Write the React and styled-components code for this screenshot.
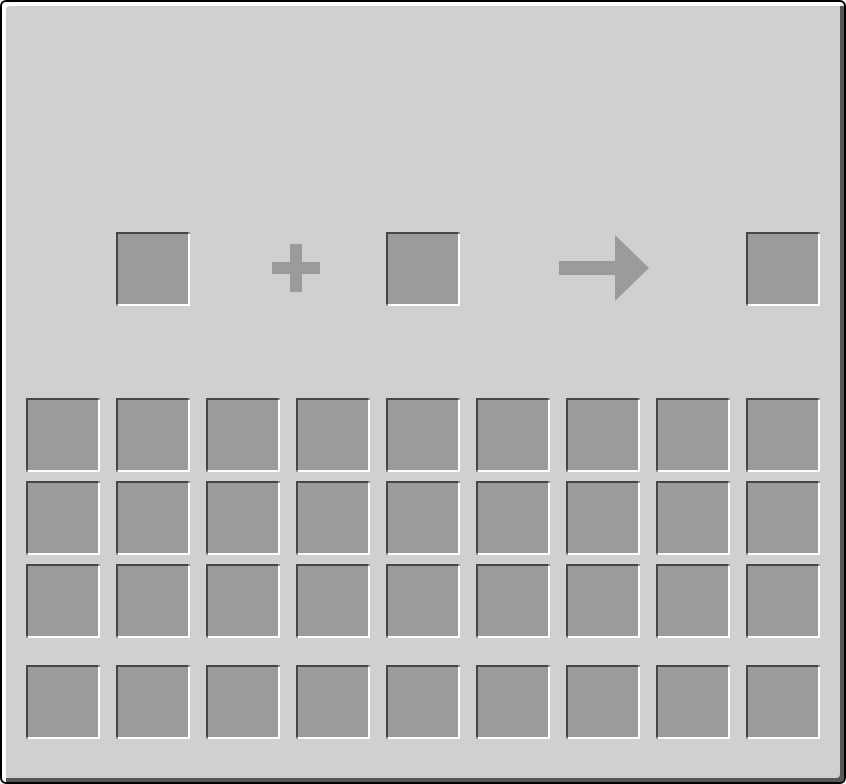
import React from 'react'
import styled, { createGlobalStyle } from 'styled-components'

const GlobalStyle = createGlobalStyle`
  html, body {
    margin: 0;
    padding: 0;
    background: #ffffff;
    font-family: "Liberation Sans", Arial, sans-serif;
  }
`

const Panel = styled.div`
  box-sizing: border-box;
  width: 846px;
  height: 784px;
  background: #d0d0d0;
  border: 2px solid #000;
  border-radius: 6px;
  box-shadow: inset 4px 4px 0 #ffffff, inset -4px -4px 0 #565656;
  padding: 230px 24px 0 24px;
  display: flex;
  flex-direction: column;
`

const Slot = styled.div`
  position: relative;
  box-sizing: border-box;
  width: 74px;
  height: 74px;
  background: #9b9b9b;
  box-shadow: inset 2px 2px 0 #464646, inset -2px -2px 0 #ffffff;
  margin-left: ${props => props.$offset || 0}px;
  flex-shrink: 0;

  &::before,
  &::after {
    content: '';
    position: absolute;
    width: 2px;
    height: 2px;
    background: #8e8e8e;
  }

  &::before {
    top: 0;
    right: 0;
  }

  &::after {
    bottom: 0;
    left: 0;
  }
`

const TopRow = styled.div`
  display: flex;
  align-items: center;
  height: 74px;
`

const Icon = styled.svg`
  display: block;
  flex-shrink: 0;
  margin-left: ${props => props.$offset || 0}px;
  margin-top: ${props => props.$lift || 0}px;
`

const Grid = styled.div`
  display: grid;
  grid-template-columns: repeat(9, 74px);
  column-gap: 16px;
  row-gap: 9px;
  margin-top: ${props => props.$top}px;
`

function Plus () {
  return (
    <Icon $offset={82} $lift={-2} width='48' height='48' viewBox='0 0 48 48' shapeRendering='crispEdges'>
      <rect x='0' y='18' width='48' height='12' fill='#9b9b9b' />
      <rect x='18' y='0' width='12' height='48' fill='#9b9b9b' />
    </Icon>
  )
}

function Arrow () {
  return (
    <Icon $offset={99} $lift={-2} width='90' height='66' viewBox='0 0 90 66'>
      <polygon points='0,26 56,26 56,0 90,33 56,66 56,40 0,40' fill='#9b9b9b' />
    </Icon>
  )
}

export default function App () {
  const inventory = Array.from({ length: 27 })
  const hotbar = Array.from({ length: 9 })

  return (
    <>
      <GlobalStyle />
      <Panel>
        <TopRow>
          <Slot $offset={90} />
          <Plus />
          <Slot $offset={66} />
          <Arrow />
          <Slot $offset={97} />
        </TopRow>
        <Grid $top={92}>
          {inventory.map((_, i) => <Slot key={i} />)}
        </Grid>
        <Grid $top={27}>
          {hotbar.map((_, i) => <Slot key={i} />)}
        </Grid>
      </Panel>
    </>
  )
}
